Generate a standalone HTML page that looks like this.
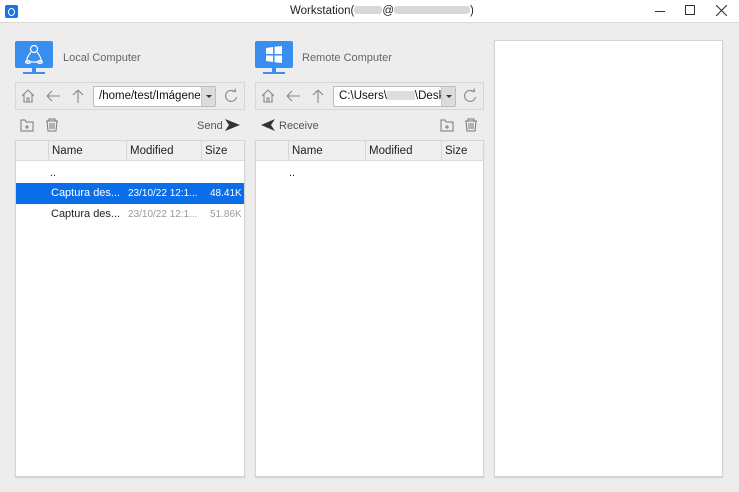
<!DOCTYPE html>
<html><head><meta charset="utf-8"><style>
*{box-sizing:border-box;margin:0;padding:0}
body{width:739px;height:492px;background:#ededed;font-family:"Liberation Sans","DejaVu Sans",sans-serif;position:relative;overflow:hidden;font-size:11px;color:#222}
.a{position:absolute}
.title{left:0;top:0;width:739px;height:23px;background:#fff;border-bottom:1px solid #d8d8d8}
.tb{height:28px;width:230px;border:1px solid #d6d6d6;background:#ececec}
.combo{background:#fff;border:1px solid #bdbdbd;border-radius:2px;height:21px;font-size:11.5px;line-height:19px;padding-left:5px;color:#111;overflow:hidden;white-space:nowrap}
.dd{position:absolute;right:0;top:0;width:14px;height:19px;background:#dcdcdc;border-left:1px solid #c8c8c8}
.dd:after{content:"";position:absolute;left:4px;top:8px;border:3px solid transparent;border-top:3px solid #333}
.tbl{width:230px;height:337px;background:#fff;border:1px solid #d4d4d4;box-shadow:0 1px 1px #ccc}
.hd{position:absolute;left:0;top:0;width:228px;height:20px;background:#efefef;border-bottom:1px solid #dcdcdc;font-size:11.5px}
.hd span{position:absolute;top:0;height:19px;line-height:20px;padding-left:3px;border-left:1px solid #d6d6d6}
.row{position:absolute;left:0;width:228px;height:21px;line-height:21px;font-size:11px}
.row span{position:absolute}
.lbl{font-size:11px;color:#666}
</style></head><body>
<div class="a title"></div>
<div class="a" style="left:5px;top:5px;width:13px;height:13px;background:#1a73e8;border-radius:2px"><div style="position:absolute;left:3px;top:2.5px;width:7px;height:8px;border:1.6px solid #fff;border-radius:50%"></div></div>
<div class="a" style="left:290px;top:5px;font-size:11.5px;color:#222">Workstation(<span style="display:inline-block;width:28px;height:8px;background:#d8d8d8;border-radius:3px"></span>@<span style="display:inline-block;width:76px;height:8px;background:#d8d8d8;border-radius:3px"></span>)</div>
<div class="a" style="left:655px;top:11px;width:10px;height:1px;background:#333"></div>
<div class="a" style="left:685px;top:5px;width:10px;height:10px;border:1px solid #333"></div>
<svg class="a" style="left:716px;top:5px" width="11" height="11"><path d="M0 0L11 11M11 0L0 11" stroke="#333" stroke-width="1.1"/></svg>

<!-- Left panel -->
<svg class="a" style="left:15px;top:41px" width="38" height="34"><rect x="0" y="0" width="38" height="27" rx="2" fill="#3a8ef0"/><rect x="17" y="27" width="4" height="4" fill="#3a8ef0"/><rect x="8" y="31" width="22" height="2" fill="#3a8ef0"/><circle cx="19" cy="8" r="3.5" fill="none" stroke="#fff" stroke-width="1.2"/><path d="M16 11 Q11 17 12 21 L26 21 Q27 17 22 11" fill="none" stroke="#fff" stroke-width="1.2"/><ellipse cx="13" cy="21" rx="2.5" ry="1.5" fill="none" stroke="#fff"/><ellipse cx="25" cy="21" rx="2.5" ry="1.5" fill="none" stroke="#fff"/></svg>
<div class="a lbl" style="left:63px;top:52px">Local Computer</div>
<div class="a tb" style="left:15px;top:82px"></div>
<svg class="a" style="left:20px;top:88px" width="70" height="16" fill="none" stroke="#888" stroke-width="1.1"><path d="M2 8L8 2L14 8M4 6V14H12V6M7 14V10H9V14"/><path d="M27 8H40M27 8L32 3M27 8L32 13"/><path d="M58 2V15M58 2L53 7M58 2L63 7"/></svg>
<div class="a combo" style="left:93px;top:86px;width:123px">/home/test/Imágenes<div class="dd"></div></div>
<svg class="a" style="left:224px;top:88px" width="14" height="15" fill="none" stroke="#888" stroke-width="1.1"><path d="M11 4A5.5 5.5 0 1 0 12.5 9"/><path d="M8 3L11.5 3.5L11 0.5"/></svg>
<svg class="a" style="left:20px;top:118px" width="40" height="14" fill="none" stroke="#777" stroke-width="1"><path d="M1 2H5L6 4H13V13H1Z"/><path d="M7 7V11M5 9H9"/><path d="M26 3H38M29 3V1H35V3M27 3L28 13H36L37 3M30 5V11M32 5V11M34 5V11"/></svg>
<div class="a" style="left:197px;top:120px;font-size:11px;color:#555">Send</div>
<svg class="a" style="left:225px;top:119px" width="15" height="12"><path d="M0 0L15 6L0 12L4 6Z" fill="#333"/></svg>
<div class="a tbl" style="left:15px;top:140px">
<div class="hd"><span style="left:0;border:none;width:32px"></span><span style="left:32px">Name</span><span style="left:110px">Modified</span><span style="left:185px">Size</span></div>
<div class="row" style="top:22px"><span style="left:34px;top:0px">..</span></div>
<div class="row" style="top:42px;background:#0a6ee8;color:#fff"><span style="left:35px">Captura des...</span><span style="left:112px;font-size:10px">23/10/22 12:1...</span><span style="left:194px;font-size:10px">48.41K</span></div>
<div class="row" style="top:63px"><span style="left:35px">Captura des...</span><span style="left:112px;font-size:10px;color:#999">23/10/22 12:1...</span><span style="left:194px;font-size:10px;color:#999">51.86K</span></div>
</div>

<!-- Middle panel -->
<svg class="a" style="left:255px;top:41px" width="38" height="34"><rect x="0" y="0" width="38" height="27" rx="2" fill="#3a8ef0"/><rect x="17" y="27" width="4" height="4" fill="#3a8ef0"/><rect x="8" y="31" width="22" height="2" fill="#3a8ef0"/><path d="M11 7L18 6V13H11ZM19.5 5.8L27 5V13H19.5ZM11 14.5H18V21L11 20ZM19.5 14.5H27V22L19.5 21.2Z" fill="#fff"/></svg>
<div class="a lbl" style="left:302px;top:52px">Remote Computer</div>
<div class="a tb" style="left:255px;top:82px;width:229px"></div>
<svg class="a" style="left:260px;top:88px" width="70" height="16" fill="none" stroke="#888" stroke-width="1.1"><path d="M2 8L8 2L14 8M4 6V14H12V6M7 14V10H9V14"/><path d="M27 8H40M27 8L32 3M27 8L32 13"/><path d="M58 2V15M58 2L53 7M58 2L63 7"/></svg>
<div class="a combo" style="left:333px;top:86px;width:123px">C:\Users\<span style="display:inline-block;width:28px;height:9px;background:#ddd;vertical-align:-1px"></span>\Desktop<div class="dd"></div></div>
<svg class="a" style="left:463px;top:88px" width="14" height="15" fill="none" stroke="#888" stroke-width="1.1"><path d="M11 4A5.5 5.5 0 1 0 12.5 9"/><path d="M8 3L11.5 3.5L11 0.5"/></svg>
<svg class="a" style="left:261px;top:119px" width="14" height="12"><path d="M14 0L0 6L14 12L10 6Z" fill="#333"/></svg>
<div class="a" style="left:279px;top:120px;font-size:11px;color:#555">Receive</div>
<svg class="a" style="left:440px;top:118px" width="40" height="14" fill="none" stroke="#777" stroke-width="1"><path d="M1 2H5L6 4H13V13H1Z"/><path d="M7 7V11M5 9H9"/><path d="M25 3H37M28 3V1H34V3M26 3L27 13H35L36 3M29 5V11M31 5V11M33 5V11"/></svg>
<div class="a tbl" style="left:255px;top:140px;width:229px">
<div class="hd" style="width:227px"><span style="left:0;border:none;width:32px"></span><span style="left:32px">Name</span><span style="left:109px">Modified</span><span style="left:185px">Size</span></div>
<div class="row" style="top:22px"><span style="left:33px;top:0px">..</span></div>
</div>

<!-- Right panel -->
<div class="a tbl" style="left:494px;top:40px;width:229px;height:437px"></div>
</body></html>
